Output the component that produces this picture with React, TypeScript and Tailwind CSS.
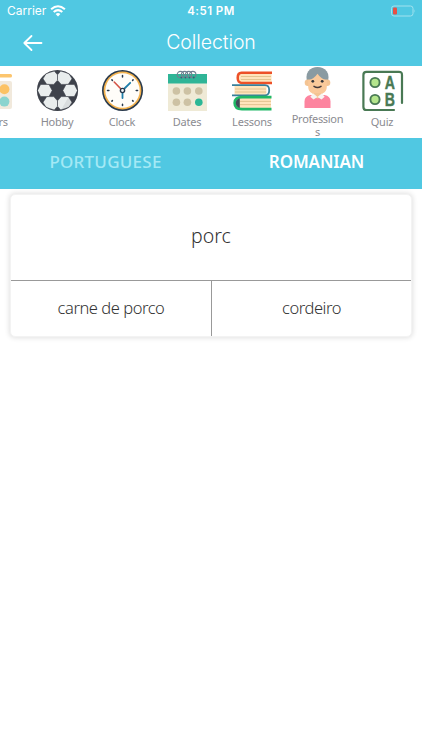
import type { ReactNode } from 'react';

const Icon = ({ children }: { children: ReactNode }) => (
  <svg width="43" height="43" viewBox="0 0 43 43" className="block shrink-0" fill="none">
    {children}
  </svg>
);

const Colors = () => (
  <Icon>
    <rect x="18" y="5" width="23" height="3.5" rx="1.5" fill="#fcc56d" />
    <rect x="12" y="12" width="29" height="28" rx="2" fill="#f1e9dc" />
    <circle cx="33.4" cy="20.3" r="5" fill="#fcc264" />
    <circle cx="33.4" cy="32.6" r="5" fill="#8bd4cf" />
  </Icon>
);

const Ball = () => (
  <Icon>
    <defs>
      <clipPath id="ball"><circle cx="21.5" cy="21.5" r="19.8" /></clipPath>
    </defs>
    <circle cx="21.5" cy="21.5" r="20.6" fill="#3e424b" />
    <g clipPath="url(#ball)" fill="#e9eded" stroke="#3e424b" strokeWidth="0.6" strokeLinejoin="round">
      <path d="M10 4.6 18.3 2 21.5 5.8V11.2L17.8 15.4H10.8L7 9.8Z" />
      <path d="M33 4.6 24.7 2 21.5 5.8V11.2L25.2 15.4H32.2L36 9.8Z" />
      <path d="M4.6 15.4H13L16.2 21.5 13 27.6H4.6L1.5 21.5Z" />
      <path d="M38.4 15.4H30L26.8 21.5 30 27.6H38.4L41.5 21.5Z" />
      <path d="M10 38.4 18.3 41 21.5 37.2V31.8L17.8 27.6H10.8L7 33.2Z" />
      <path d="M33 38.4 24.7 41 21.5 37.2V31.8L25.2 27.6H32.2L36 33.2Z" />
    </g>
    <path d="M41 24c-1 9-7 16-16 17l7-12 7-1Z" fill="#242b30" fillOpacity="0.08" />
  </Icon>
);

const Clock = () => (
  <Icon>
    <circle cx="21.5" cy="21.5" r="20.5" fill="#28394c" />
    <circle cx="21.5" cy="21.5" r="18.9" fill="#f4b34f" />
    <circle cx="21.5" cy="21.5" r="17.2" fill="#fffdf9" />
    <path d="M21.5 6.5v1.4M21.5 35.2v1.4M6.5 21.5h1.4M35.2 21.5h1.4M10.9 10.9l.5.5M31.6 31.6l.5.5M32.1 10.9l-.5.5M11.4 31.6l-.5.5" stroke="#28394c" strokeWidth="1.5" strokeLinecap="round" />
    <path d="m20 20-6.8-7" stroke="#d45345" strokeWidth="1.6" strokeLinecap="round" />
    <path d="m23 20 6.2-6.2M21.5 24v5" stroke="#207ea9" strokeWidth="1.8" strokeLinecap="round" />
    <circle cx="21.5" cy="21.5" r="2.1" fill="#f6f9fa" stroke="#28394c" strokeWidth="1.4" />
  </Icon>
);

const Dates = () => (
  <Icon>
    <path d="M2 5h39v37H2Z" fill="#efead6" />
    <path d="M2 5h39v9.5H2Z" fill="#2fb597" />
    {[13.8, 17.9, 22, 26.1].map((x) => (
      <g key={x}>
        <circle cx={x + 0.6} cy="5.6" r="3.2" stroke="#718091" strokeWidth="1.1" />
        <circle cx={x + 1.6} cy="8.4" r="1" fill="#2a6874" />
      </g>
    ))}
    {[22, 33.2].map((y) => [10.4, 21.4, 32.8].map((x) => (
      <circle key={`${x}-${y}`} cx={x} cy={y} r="3.8" fill={x > 30 && y > 30 ? '#2bb796' : '#cdc2a4'} />
    )))}
  </Icon>
);

const Lessons = () => (
  <Icon>
    <path d="M8 4.2h32.5v9.5H8Z" fill="#ffe4bc" />
    <path d="M10 7.5h30M10 10.5h30" stroke="#e0bf8b" strokeWidth="0.9" />
    <path d="M41 3.7H10.5Q6.7 3.7 6.7 8.8t3.8 5.1H41" stroke="#ed5128" strokeWidth="2.5" />
    <path d="M3.5 17h32v9h-32Z" fill="#ffe4bc" />
    <path d="M4 20h31M4 23h31" stroke="#dfbf8b" strokeWidth="0.9" />
    <path d="M1 16.1h33q4.2 0 4.2 5.1T34 26.3H1" stroke="#39809b" strokeWidth="1.8" />
    <path d="M8 29h32v10H8Z" fill="#ffe4bc" />
    <path d="M9 32.4h31M9 35.6h31" stroke="#dfbf8b" strokeWidth="0.9" />
    <path d="M40.5 28.1H11Q3.7 28.1 3.7 34T11 40.2h29.5" stroke="#20b866" strokeWidth="2.8" />
    <path d="M8.8 29.3v9.7Q4.8 38 4.8 34.1t4-4.8Z" fill="#414b58" />
  </Icon>
);

const Professions = () => (
  <Icon>
    <path d="M12.1 19Q8.7 10 12.3 5.2 16 1 21.5 1t9.2 4.2q3.6 4.8.2 13.8Z" fill="#8a9ba2" />
    <rect x="8.7" y="13.4" width="25.6" height="6.5" rx="3.2" fill="#f4c493" />
    <path d="M12.2 14.5Q18 13 21.5 7.8q3.5 5.2 9.3 6.7v6.2q0 4.6-4 6.5l-1.8 2v3.5q-3.5 3-7 0v-3.5l-1.8-2q-4-1.9-4-6.5Z" fill="#fac99a" />
    <circle cx="16.8" cy="15.3" r="1.4" fill="#34353b" /><circle cx="26.2" cy="15.3" r="1.4" fill="#34353b" />
    <path d="M18 20.3q3.5 2.2 7 0" stroke="#42383a" strokeWidth="1.5" strokeLinecap="round" />
    <path d="M8.5 42v-6.5q0-5.4 6-6.5h14q6 1.1 6 6.5V42Z" fill="#fd849f" />
    <path d="M18 27h7v3.5q-3.5 4-7 0Z" fill="#f4c493" />
    <path d="m17.3 27.5 4.2 3.5-4 2.6-3.2-2.9ZM25.7 27.5 21.5 31l4 2.6 3.2-2.9Z" fill="#f7f4f1" />
  </Icon>
);

const Quiz = () => (
  <Icon>
    <path d="M33 41H5.5q-3.1 0-3.1-3.1V5.9q0-3.1 3.1-3.1h32.4Q41 2.8 41 5.9V34" stroke="#497954" strokeWidth="2.2" strokeLinecap="round" />
    <circle cx="14" cy="13.5" r="4.6" fill="#b4e58c" stroke="#497954" strokeWidth="1.9" />
    <circle cx="14" cy="30.5" r="4.6" fill="#b4e58c" stroke="#497954" strokeWidth="1.9" />
    <g fill="#497954" stroke="#497954" strokeWidth="0.4" className="font-['Liberation_Sans',sans-serif] text-[18px] font-bold">
      <text x="23.8" y="20" textLength="10.2" lengthAdjust="spacingAndGlyphs">A</text>
      <text x="23.8" y="37" textLength="10.2" lengthAdjust="spacingAndGlyphs">B</text>
    </g>
  </Icon>
);

const categories = [
  { label: 'Colors', icon: <Colors /> },
  { label: 'Hobby', icon: <Ball /> },
  { label: 'Clock', icon: <Clock /> },
  { label: 'Dates', icon: <Dates /> },
  { label: 'Lessons', icon: <Lessons /> },
  { label: 'Professions', icon: <Professions /> },
  { label: 'Quiz', icon: <Quiz /> },
];

export default function App() {
  return (
    <div className="h-[750px] w-[422px] overflow-hidden bg-white font-['Noto_Sans',sans-serif]">
      <header className="h-[66px] bg-[#50c8e2] font-['Inter',sans-serif] text-white">
        <div className="grid h-[22px] grid-cols-3 items-center pl-[7px] pr-[6px] text-[11.5px] leading-[22px]">
          <div className="flex items-center gap-[4px]">
            <span className="text-[12px]">Carrier</span>
            <svg width="16" height="12" viewBox="0 0 16 12" fill="none" stroke="white" strokeWidth="2.1">
              <path d="M1.1 4.3Q8-1.8 14.9 4.3M3.7 7Q8 3.3 12.3 7" />
              <path d="M5.6 8.9Q8 7 10.4 8.9L8 11.4Z" fill="white" stroke="none" />
            </svg>
          </div>
          <span className="pr-[1px] text-center font-semibold tracking-[0.45px]">4:51 PM</span>
          <svg className="justify-self-end" width="26" height="12" viewBox="0 0 26 12" fill="none">
            <rect x="1.5" y="1" width="21.5" height="10" rx="2.5" stroke="#a1e2ef" />
            <rect x="3" y="2.5" width="4" height="7" rx="1" fill="#e74f45" />
            <path d="M24.5 4.3q1.3 1.7 0 3.4Z" fill="#a1e2ef" />
          </svg>
        </div>
        <div className="grid h-[42px] grid-cols-[64px_1fr_64px] items-center">
          <svg className="ml-[23px]" width="20" height="18" viewBox="0 0 20 18" fill="none" stroke="white" strokeWidth="1.8" strokeLinecap="round" strokeLinejoin="round">
            <path d="M18.5 9H1.3M8.5 2 1.3 9l7.2 7" />
          </svg>
          <h1 className="text-center text-[19.5px] font-light tracking-[-0.1px]">Collection</h1>
        </div>
      </header>

      <nav className="-ml-[40px] flex h-[72px] w-[462px] overflow-hidden">
        {categories.map(({ label, icon }) => {
          const long = label === 'Professions';
          return (
            <div key={label} className={`flex w-[65px] shrink-0 flex-col items-center ${long ? 'pt-0' : 'pt-[3px]'}`}>
              {icon}
              <span className={`text-center text-[11px] text-[#8b8b91] ${long ? 'mt-[4px] w-[52px] break-all leading-[12.5px] tracking-[-0.3px]' : 'mt-[3px] pr-[1px] leading-[14px] tracking-[-0.2px]'}`}>
                {label}
              </span>
            </div>
          );
        })}
      </nav>

      <div className="grid h-[51px] grid-cols-2 bg-[#50c8e2] text-center text-[17px] leading-[48px]">
        <span className="font-medium tracking-[0.25px] text-[#a4e9f5]">PORTUGUESE</span>
        <span className="font-semibold tracking-[-0.1px] text-white">ROMANIAN</span>
      </div>

      <main className="mx-[10px] mt-[5px] h-[143px] overflow-hidden rounded-[5px] border border-[#f3f3f3] bg-white font-light text-[#333] shadow-[0_0_5px_1px_rgba(0,0,0,0.12)]">
        <div className="h-[86px] border-b border-[#999] text-center text-[19.5px] leading-[81px]">porc</div>
        <div className="grid h-[56px] grid-cols-[200px_1fr] text-center text-[16.5px] leading-[54px] tracking-[-0.45px]">
          <span>carne de porco</span>
          <span className="border-l border-[#999]">cordeiro</span>
        </div>
      </main>
    </div>
  );
}
